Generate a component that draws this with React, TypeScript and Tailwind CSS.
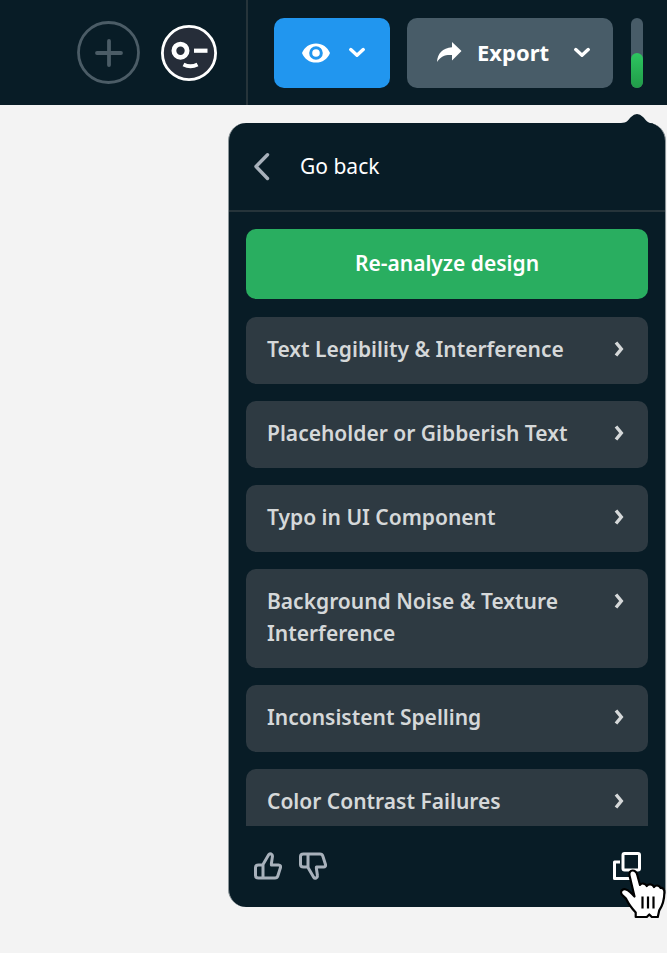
import { useState } from "react";

const issues = [
    "Text Legibility & Interference",
    "Placeholder or Gibberish Text",
    "Typo in UI Component",
    "Background Noise & Texture Interference",
    "Inconsistent Spelling",
    "Color Contrast Failures",
];

function ChevronDown() {
    return (
        <svg className="w-4 h-4" viewBox="0 0 16 16" fill="none" stroke="currentColor" strokeWidth="3.4" strokeLinecap="round" strokeLinejoin="round">
            <path d="M1.8 4.6L8 10.2L14.2 4.6" />
        </svg>
    );
}

function ChevronRight() {
    return (
        <svg className="w-4 h-4 shrink-0" viewBox="0 0 16 16" fill="none" stroke="currentColor" strokeWidth="3.4">
            <path d="M5 1.5L10.3 8L5 14.5" />
        </svg>
    );
}

function Avatar() {
    return (
        <svg className="w-14 h-14" viewBox="0 0 56 56" fill="none" stroke="#fff">
            <circle cx="28" cy="28" r="26.6" fill="#262d39" strokeWidth="2.8" />
            <circle cx="19.5" cy="25.7" r="6.6" strokeWidth="4.8" />
            <path d="M33 25.7H46.5" strokeWidth="4.2" />
            <path d="M22.5 39.5Q29.5 43 36.500 39.5" strokeWidth="4" />
        </svg>
    );
}

function Thumb({ down = false }: { down?: boolean }) {
    return (
        <svg className={down ? "w-7 h-7 -scale-y-100" : "w-7 h-7"} viewBox="0 0 28 28" fill="none" stroke="currentColor" strokeWidth="3" strokeLinejoin="round">
            <path d="M9 12.5L14.8 2.6Q15.6 1.4 17 2Q18.8 2.8 18.4 4.8L17.4 11.5V13H24.5Q27 13.200 26.5 15.5L23.8 24Q23.2 26 21 26H4.5Q1.500 26 1.500 23.5V15.500Q1.500 13 4.5 13H9V26" />
        </svg>
    );
}

function HandCursor() {
    return (
        <svg className="w-[50px] h-[52px] absolute left-1 top-4 pointer-events-none" viewBox="0 0 50 52" fill="#fff" stroke="#000" strokeWidth="2.2" strokeLinejoin="round">
            <path d="M12.5 7.500C11.8 4.500 13.500 2.500 15.500 2.500C18 2.500 19.500 4 20.300 7L23 17C24.500 14.800 28.300 15 29.800 18C31.500 15.500 35.500 16 37 19C39 16.800 42.500 17 43.500 20C46 19.600 47.600 21.500 47.400 24.500C47.300 31 46 37 42.200 42.500L40.800 49H34.800L32.300 46.500L29.800 49H18.700V44.500C15 40.500 12 37 9.500 31.500C8.500 29 4 27.500 4 24.500C4 22 6.500 20.600 9 21.500C12 22.500 14.500 25 17.500 28.500Z" />
            <path d="M25.500 28.500V40.500M31 28.500V40.500M36.500 28.500V40.500" strokeWidth="2.2" />
        </svg>
    );
}

export default function App() {
    const [vote, setVote] = useState<"up" | "down" | null>(null);

    return (
        <div className="min-h-screen bg-[#f3f3f3] font-['Noto_Sans',sans-serif] text-white">
            <header className="flex items-center justify-end h-[105px] pr-6 bg-[#081c26]">
                <button aria-label="Add" className="mr-[21px] cursor-pointer text-[#4b5c66]">
                    <svg className="w-[63px] h-[63px]" viewBox="0 0 63 63" fill="none" stroke="currentColor" strokeWidth="2.8" strokeLinecap="round">
                        <circle cx="31.5" cy="31.5" r="30" />
                        <path d="M20 32H44M32 20V44" strokeWidth="3.8" />
                    </svg>
                </button>
                <button aria-label="Profile" className="mr-[29px] cursor-pointer">
                    <Avatar />
                </button>
                <div className="self-stretch w-0.5 mr-[26px] bg-[#26343a]"></div>
                <button aria-label="Preview" className="flex items-center justify-between w-[116px] h-[70px] pl-7 pr-[25px] mr-[17px] rounded-[10px] bg-[#2196ef] cursor-pointer">
                    <svg className="w-7 h-5" viewBox="0 0 28 20">
                        <path fill="currentColor" fillRule="evenodd" d="M14 0.4C20.5 0.4 25.5 4 28 10C25.5 16 20.5 19.6 14 19.6S2.5 16 0 10C2.5 4 7.5 0.4 14 0.4ZM14 3.2A6.8 6.8 0 1 0 14 16.8A6.8 6.8 0 1 0 14 3.2ZM14 6.2A3.8 3.8 0 1 1 14 13.8A3.8 3.8 0 1 1 14 6.2Z" />
                    </svg>
                    <ChevronDown />
                </button>
                <button className="flex items-center w-[206px] h-[70px] pl-[30px] pr-[23px] mr-[18px] rounded-[10px] bg-[#485c68] text-[22px] font-bold cursor-pointer">
                    <svg className="w-6 h-5 mr-4 overflow-visible" viewBox="0 0 24 20" fill="currentColor">
                        <path d="M15 -1L24.5 8L15 17.5V12C8.5 11.5 4 13 0 19C0.5 10.5 5.5 5 15 4.2Z" />
                    </svg>
                    <span className="mr-auto">Export</span>
                    <ChevronDown />
                </button>
                <div className="flex items-end w-3 h-[70px] rounded-full bg-[#485c68]">
                    <div className="w-full h-1/2 rounded-full bg-linear-to-b from-[#2dc660] to-[#219b49]"></div>
                </div>
            </header>

            <main className="flex justify-end pt-[18px] pb-10 pr-px">
                <section className="relative w-[438px] border-x border-[#8b9599] rounded-[18px] bg-[#081c26]">
                    <svg className="w-8 h-3 absolute right-3 -top-[9px]" viewBox="0 0 32 12" fill="#081c26">
                        <path d="M0 9C6 9 7 6 10 3Q13 0 16 0Q19 0 22 3C25 6 26 9 32 9.5V12H0Z" />
                    </svg>
                    <button className="flex items-center w-full h-[89px] pl-[25px] border-b-2 border-[#26343a] text-[21px] cursor-pointer">
                        <svg className="w-4 h-7 mr-[30px] text-[#a8b1bb]" viewBox="0 0 16 28" fill="none" stroke="currentColor" strokeWidth="3.4" strokeLinecap="round" strokeLinejoin="round">
                            <path d="M13.5 1.8L2 13.5L13.500 25.5" />
                        </svg>
                        Go back
                    </button>

                    <div className="flex flex-col gap-[17px] max-h-[614px] px-[17px] pt-[17px] overflow-y-auto [scrollbar-width:none]">
                        <button className="h-[70px] mb-px shrink-0 rounded-[10px] bg-[#29ae60] text-[21px] font-semibold cursor-pointer">
                            Re-analyze design
                        </button>
                        {issues.map((issue) => (
                            <button key={issue} className="flex items-start justify-between shrink-0 pt-4 pb-[19px] pl-[21px] pr-[21px] rounded-[10px] bg-[#2e3a42] text-left text-[21px] leading-8 font-semibold text-[#d5d8d9] cursor-pointer">
                                <span className="max-w-[320px]">{issue}</span>
                                <span className="flex items-center h-8">
                                    <ChevronRight />
                                </span>
                            </button>
                        ))}
                    </div>

                    <footer className="flex items-center h-[81px] pb-0.5 pl-[25px] pr-6 text-[#a8b1bb]">
                        <button aria-label="Good result" aria-pressed={vote === "up"} onClick={() => setVote("up")} className="mr-[17px] cursor-pointer">
                            <Thumb />
                        </button>
                        <button aria-label="Bad result" aria-pressed={vote === "down"} onClick={() => setVote("down")} className="mr-auto cursor-pointer">
                            <Thumb down />
                        </button>
                        <button aria-label="Copy" className="relative text-white cursor-pointer">
                            <svg className="w-7 h-7" viewBox="0 0 28 28" fill="none" stroke="currentColor" strokeWidth="3" strokeLinejoin="round">
                                <rect x="10" y="1.5" width="16.5" height="16.5" rx="1.5" />
                                <path d="M7 10H1.5V26.5H18V21" />
                            </svg>
                            <HandCursor />
                        </button>
                    </footer>
                </section>
            </main>
        </div>
    );
}
